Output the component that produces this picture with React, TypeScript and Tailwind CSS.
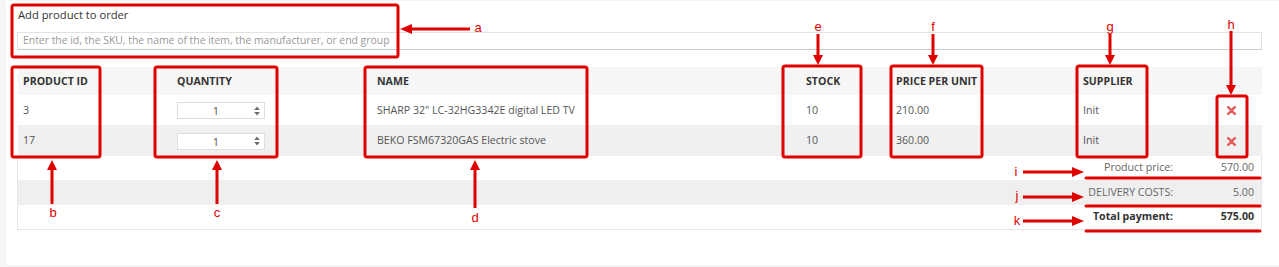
import React from "react";

const RED = "#e10000";

type Row = { id: string; name: string; stock: string; price: string; supplier: string };

const rows: Row[] = [
  { id: "3", name: 'SHARP 32" LC-32HG3342E digital LED TV', stock: "10", price: "210.00", supplier: "Init" },
  { id: "17", name: "BEKO FSM67320GAS Electric stove", stock: "10", price: "360.00", supplier: "Init" },
];

function SortIcon() {
  return (
    <svg width="6" height="10" viewBox="0 0 6 10" className="shrink-0">
      <path d="M3 0.5 L5.8 4 H0.2 Z" fill="#6b6b6b" />
      <path d="M3 9.5 L5.8 6 H0.2 Z" fill="#6b6b6b" />
    </svg>
  );
}

function RemoveIcon() {
  return (
    <svg width="9" height="9" viewBox="0 0 9 9" className="mx-auto block">
      <path d="M1.2 1.2 L7.8 7.8 M7.8 1.2 L1.2 7.8" stroke="#e25c5c" strokeWidth="2.4" strokeLinecap="round" />
    </svg>
  );
}

function QtyInput() {
  return (
    <div className="flex h-[17px] w-[88px] items-center border border-[#dedede] bg-white pr-[4px]">
      <span className="flex-1 text-center text-[11px] leading-none text-[#555]">1</span>
      <SortIcon />
    </div>
  );
}

function Annotations() {
  const box = (x: number, y: number, w: number, h: number, k: string) => (
    <rect key={k} x={x} y={y} width={w} height={h} rx={2} fill="none" stroke={RED} strokeWidth={3} />
  );
  const down = (x: number, y1: number, y2: number, k: string) => (
    <g key={k}>
      <line x1={x} y1={y1} x2={x} y2={y2 - 8} stroke={RED} strokeWidth={3} />
      <path d={`M${x - 5} ${y2 - 10} L${x + 5} ${y2 - 10} L${x} ${y2} Z`} fill={RED} />
    </g>
  );
  const up = (x: number, y1: number, y2: number, k: string) => (
    <g key={k}>
      <line x1={x} y1={y1 + 8} x2={x} y2={y2} stroke={RED} strokeWidth={3} />
      <path d={`M${x - 5} ${y1 + 10} L${x + 5} ${y1 + 10} L${x} ${y1} Z`} fill={RED} />
    </g>
  );
  const right = (x1: number, x2: number, y: number, k: string) => (
    <g key={k}>
      <line x1={x1} y1={y} x2={x2 - 8} y2={y} stroke={RED} strokeWidth={3} />
      <path d={`M${x2 - 12} ${y - 5} L${x2 - 12} ${y + 5} L${x2} ${y} Z`} fill={RED} />
    </g>
  );
  const label = (x: number, y: number, t: string) => (
    <text key={t} x={x} y={y} fill={RED} fontSize={13} textAnchor="middle" fontFamily="'Liberation Sans', Arial, sans-serif">
      {t}
    </text>
  );
  const underline = (y: number, k: string) => (
    <line key={k} x1={1086} y1={y} x2={1260} y2={y} stroke={RED} strokeWidth={3} strokeLinecap="round" />
  );

  return (
    <svg className="pointer-events-none absolute left-0 top-0" width="1279" height="267" viewBox="0 0 1279 267">
      {box(12, 5, 386, 52, "a")}
      <line x1={409} y1={29} x2={470} y2={29} stroke={RED} strokeWidth={3} />
      <path d="M400 29 L412 24 L412 34 Z" fill={RED} />
      {label(478, 32, "a")}

      {box(12, 67, 88, 90, "b")}
      {box(155, 67, 122, 90, "c")}
      {box(365, 67, 222, 90, "d")}
      {box(783, 66, 78, 91, "e")}
      {box(891, 66, 91, 91, "f")}
      {box(1077, 66, 70, 91, "g")}
      {box(1217, 96, 30, 61, "h")}

      {up(52, 160, 204, "ub")}
      {up(217, 160, 204, "uc")}
      {up(475, 160, 208, "ud")}
      {label(53, 217, "b")}
      {label(217, 217, "c")}
      {label(475, 222, "d")}

      {down(818, 34, 65, "de")}
      {down(933, 34, 65, "df")}
      {down(1110, 34, 65, "dg")}
      {down(1231, 31, 95, "dh")}
      {label(818, 31, "e")}
      {label(933, 31, "f")}
      {label(1110, 31, "g")}
      {label(1231, 29, "h")}

      {right(1023, 1084, 172, "ri")}
      {right(1023, 1084, 197, "rj")}
      {right(1023, 1084, 221, "rk")}
      {label(1016, 176, "i")}
      {label(1017, 200, "j")}
      {label(1017, 225, "k")}

      {underline(178, "ui")}
      {underline(206, "uj")}
      {underline(231, "uk")}
    </svg>
  );
}

export default function App() {
  return (
    <div className="relative h-[267px] w-[1279px] overflow-hidden bg-[#f4f5f7] pt-px" style={{ fontFamily: "'Open Sans', 'Noto Sans', sans-serif" }}>
      <div className="ml-[6px] h-[264px] bg-white pl-[12px] pr-[17px] pt-[5px]">
        <div className="text-[11.2px] leading-[18px] text-[#333]">Add product to order</div>
        <div className="ml-[-1px] mt-[8px] flex h-[18px] items-center border border-[#e2e2e2] border-b-[#cccccc] px-[5px] text-[10.4px] text-[#999]">
          Enter the id, the SKU, the name of the item, the manufacturer, or end group
        </div>

        <table className="mt-[17px] w-full table-fixed border-collapse text-[10.6px] text-[#555]">
          <colgroup>
            <col className="w-[154px]" />
            <col className="w-[200px]" />
            <col className="w-[429px]" />
            <col className="w-[90px]" />
            <col className="w-[187px]" />
            <col className="w-[122px]" />
            <col />
          </colgroup>
          <thead>
            <tr className="h-[28px] bg-[#f6f6f6] text-left font-bold uppercase text-[#333]">
              <th className="px-[5px] pt-px">Product ID</th>
              <th className="px-[5px] pt-px">Quantity</th>
              <th className="px-[5px] pt-px">Name</th>
              <th className="px-[5px] pt-px">Stock</th>
              <th className="px-[5px] pt-px">Price per unit</th>
              <th className="px-[5px] pt-px">Supplier</th>
              <th />
            </tr>
          </thead>
          <tbody>
            {rows.map((r, i) => (
              <tr key={r.id} className={i % 2 ? "h-[31px] bg-[#f0f0f0]" : "h-[30px] bg-white"}>
                <td className="px-[5px] pt-px">{r.id}</td>
                <td className="px-[5px] pt-px">
                  <QtyInput />
                </td>
                <td className="px-[5px] pt-px">{r.name}</td>
                <td className="px-[5px] pt-px">{r.stock}</td>
                <td className="px-[5px] pt-px">{r.price}</td>
                <td className="px-[5px] pt-px">{r.supplier}</td>
                <td className="pt-px">
                  <RemoveIcon />
                </td>
              </tr>
            ))}
          </tbody>
        </table>

        <div className="ml-[-1px] border-x border-b border-[#e6e6e6] text-[10.6px] text-[#666]">
          <div className="flex h-[24px] items-center justify-end">
            <span className="mr-[28px]">Product price:</span>
            <span className="w-[60px] pr-[7px] text-right">570.00</span>
          </div>
          <div className="flex h-[25px] items-center justify-end bg-[#efefef]">
            <span className="mr-[28px]">DELIVERY COSTS:</span>
            <span className="w-[60px] pr-[7px] text-right">5.00</span>
          </div>
          <div className="flex h-[24px] items-center justify-end font-bold text-[#333]">
            <span className="mr-[28px]">Total payment:</span>
            <span className="w-[60px] pr-[7px] text-right">575.00</span>
          </div>
        </div>
      </div>
      <Annotations />
    </div>
  );
}
